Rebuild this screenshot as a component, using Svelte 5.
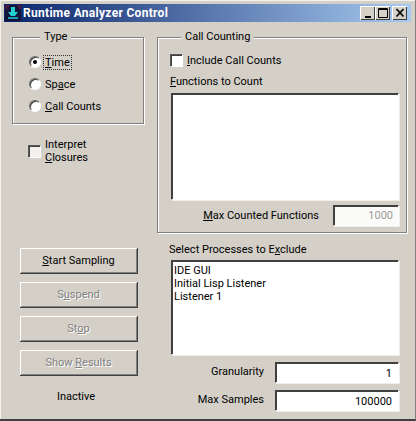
<script>
  const radios = [
    { pre: '', key: 'T', post: 'ime', on: true },
    { pre: 'Sp', key: 'a', post: 'ce', on: false },
    { pre: '', key: 'C', post: 'all Counts', on: false }
  ];
  const buttons = [
    { pre: '', key: 'S', post: 'tart Sampling', off: false },
    { pre: 'S', key: 'u', post: 'spend', off: true },
    { pre: 'St', key: 'o', post: 'p', off: true },
    { pre: 'Show ', key: 'R', post: 'esults', off: true }
  ];
  const processes = ['IDE GUI', 'Initial Lisp Listener', 'Listener 1'];
</script>

<div class="window">
  <header class="title">
    <svg class="appicon" width="16" height="16" viewBox="0 0 16 16">
      <rect width="16" height="16" fill="#14143a"/>
      <path d="M1 1h3M12 1h3M1 1v3M15 1v3" stroke="#8a2030" fill="none"/>
      <path d="M6 2h4v5h3l-3 4H6L3 7h3z" fill="#22d0d0"/>
      <path d="M3 12h10v2H3z" fill="#18a0b0"/>
    </svg>
    <span class="title-text">Runtime Analyzer Control</span>
    <div class="caption">
      <span class="cbtn"><svg width="14" height="12" viewBox="0 0 14 12"><path d="M4 9h6v2H4z" fill="#000"/></svg></span>
      <span class="cbtn"><svg width="14" height="12" viewBox="0 0 14 12"><path d="M2.500 1.500h9v9h-9zM2 2.500h10" fill="none" stroke="#000"/></svg></span>
      <span class="cbtn close"><svg width="14" height="12" viewBox="0 0 14 12"><path d="M3.500 2l7 7.500M10.500 2l-7 7.500" stroke="#000" stroke-width="1.700" fill="none"/></svg></span>
    </div>
  </header>

  <div class="content">
    <div class="left">
      <fieldset class="group type">
        <legend>Type</legend>
        {#each radios as r}
          <div class="radio-row">
            <span class="radio" class:on={r.on}></span>
            <span class="radio-label" class:focus={r.on}>{r.pre}<u>{r.key}</u>{r.post}</span>
          </div>
        {/each}
      </fieldset>

      <div class="interpret">
        <span class="check"></span>
        <span class="two-line">Interpret<br /><u>C</u>losures</span>
      </div>

      <div class="buttons">
        {#each buttons as b}
          <div class="btn" class:off={b.off}><span>{b.pre}<u>{b.key}</u>{b.post}</span></div>
        {/each}
      </div>

      <div class="status">Inactive</div>
    </div>

    <div class="right">
      <fieldset class="group counting">
        <legend>Call Counting</legend>
        <div class="include">
          <span class="check white"></span>
          <span><u>I</u>nclude Call Counts</span>
        </div>
        <div class="fn-label"><u>F</u>unctions to Count</div>
        <div class="sunken fn-list"></div>
        <div class="field-row max-counted">
          <span><u>M</u>ax Counted Functions</span>
          <div class="sunken disabled value">1000</div>
        </div>
      </fieldset>

      <div class="ex-label">Select Processes to E<u>x</u>clude</div>
      <div class="sunken ex-list">
        {#each processes as p}<div>{p}</div>{/each}
      </div>

      <div class="field-row gran">
        <span>Granularity</span>
        <div class="sunken value wide">1</div>
      </div>
      <div class="field-row samples">
        <span>Max Samples</span>
        <div class="sunken value wide">100000</div>
      </div>
    </div>
  </div>
</div>

<style>
  :global(body) {
    margin: 0;
    background: #d4d0c8;
  }
  .window {
    box-sizing: border-box;
    width: 416px;
    height: 421px;
    padding: 4px;
    background: #d4d0c8;
    border-bottom: 2px solid #404040;
    border-right: 1px solid #808080;
    box-shadow: inset 1px 1px 0 #f4f2ee;
    font: 11px/13px Roboto, "Liberation Sans", sans-serif;
    color: #000;
    overflow: hidden;
  }
  u { text-decoration-thickness: 1px; text-underline-offset: 1px; }

  .title {
    display: flex;
    align-items: center;
    height: 18px;
    padding: 0 4px 0 1px;
    background: linear-gradient(90deg, #0a246a, #a6caf0);
  }
  .appicon { flex: none; margin-right: 2px; }
  .title-text {
    color: #fff;
    font-weight: 700;
    font-size: 12px;
    line-height: 18px;
    letter-spacing: 0.3px;
  }
  .caption { display: flex; margin-left: auto; }
  .cbtn {
    display: flex;
    box-sizing: border-box;
    width: 15px;
    height: 14px;
    align-items: center;
    justify-content: center;
    background: #d4d0c8;
    box-shadow: inset 1px 1px 0 #fff, inset -1px -1px 0 #404040;
  }
  .close { margin-left: 2px; }

  .content {
    display: grid;
    grid-template-columns: 132px 250px;
    column-gap: 13px;
    padding: 8px 0 0 8px;
  }

  .group {
    margin: 0;
    padding: 0;
    min-width: 0;
    border: 1px solid #808080;
    box-shadow: inset 1px 1px 0 #fff, 1px 1px 0 #fff;
    box-sizing: border-box;
  }
  legend {
    padding: 0 4px;
    margin-left: 11px;
    line-height: 14px;
    height: 14px;
    background: #d4d0c8;
  }

  .type {
    height: 94px;
    padding: 7px 0 0 16px;
  }
  .radio-row {
    display: flex;
    align-items: center;
    height: 22px;
    gap: 3px;
  }
  .radio {
    flex: none;
    position: relative;
    box-sizing: border-box;
    width: 12px;
    height: 12px;
    border-radius: 50%;
    background: #fff;
    border: 1px solid;
    border-color: #6c6a66 #fff #fff #6c6a66;
    box-shadow: inset 1px 1px 0 #404040;
  }
  .radio.on::after {
    content: '';
    position: absolute;
    left: 3px;
    top: 3px;
    width: 4px;
    height: 4px;
    border-radius: 50%;
    background: #000;
  }
  .radio-label { padding: 0 1px; }
  .radio-label.focus { outline: 1px dotted #333; }

  .check {
    flex: none;
    box-sizing: border-box;
    display: block;
    width: 13px;
    height: 13px;
    background: #f2f1ee;
    border: 1px solid;
    border-color: #5a5a5a #fff #fff #5a5a5a;
    box-shadow: inset 1px 1px 0 #404040;
  }
  .check.white { background: #fff; }

  .interpret {
    display: flex;
    align-items: center;
    gap: 4px;
    margin: 14px 0 0 16px;
    height: 26px;
  }

  .buttons {
    display: flex;
    flex-direction: column;
    gap: 9px;
    margin: 84px 0 0 8px;
    width: 117px;
  }
  .btn {
    box-sizing: border-box;
    height: 25px;
    display: flex;
    align-items: center;
    justify-content: center;
    background: #d4d0c8;
    box-shadow: inset 1px 1px 0 #fff, inset -1px -1px 0 #808080, 0 1px 0 #404040, 1px 0 0 #404040, 1px 1px 0 #404040;
  }
  .btn.off span {
    color: #808080;
    text-shadow: 1px 1px 0 #fff;
  }
  .status {
    margin: 15px 0 0 8px;
    width: 112px;
    text-align: center;
  }

  .counting {
    height: 203px;
    padding: 9px 0 0 12px;
  }
  .include {
    display: flex;
    align-items: center;
    gap: 4px;
    height: 14px;
  }
  .fn-label { margin: 8px 0 0 0; }
  .sunken {
    box-sizing: border-box;
    background: #fff;
    border: 1px solid;
    border-color: #404040 #fff #fff #404040;
    box-shadow: inset 1px 1px 0 #404040, 1px 1px 0 #f0eee9;
  }
  .fn-list {
    margin: 5px 0 0 1px;
    width: 228px;
    height: 107px;
  }
  .field-row {
    display: flex;
    align-items: center;
    justify-content: flex-end;
  }
  .max-counted {
    width: 229px;
    margin-top: 5px;
    gap: 14px;
  }
  .value {
    text-align: right;
    padding: 3px 5px 0 0;
  }
  .disabled {
    width: 66px;
    height: 21px;
    background: #fafaf8;
    color: #9a9a96;
  }
  .ex-label { margin: 10px 0 0 12px; }
  .ex-list {
    margin: 4px 0 0 14px;
    width: 228px;
    height: 95px;
    padding: 3px 0 0 2px;
  }
  .gran, .samples {
    width: 242px;
    gap: 11px;
  }
  .gran { margin-top: 7px; }
  .samples { margin-top: 7px; }
  .gran > span, .samples > span { margin-bottom: 3px; }
  .wide {
    width: 124px;
    height: 21px;
    padding: 4px 6px 0 0;
  }
</style>
